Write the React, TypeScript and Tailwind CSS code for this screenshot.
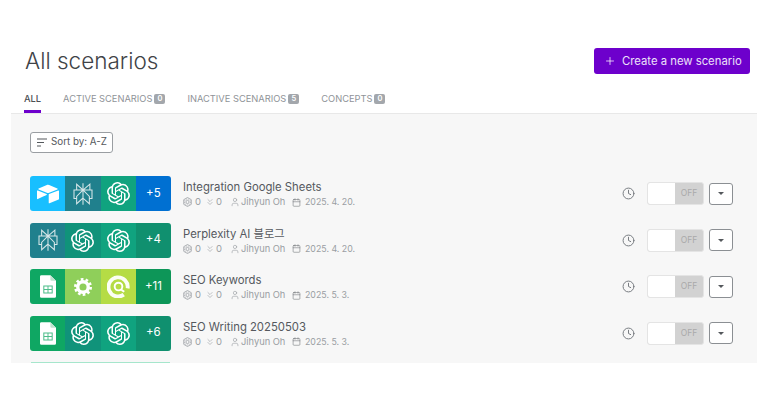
import { SiOpenai, SiAirtable, SiPerplexity } from "react-icons/si";
import { Plus, Clock, User, Calendar, ChevronsDown } from "lucide-react";

const font = { fontFamily: "Inter, 'Noto Sans CJK KR', sans-serif" };

function Sheets() {
  return (
    <svg width="16" height="23" viewBox="0 0 17 24">
      <path d="M1.5 0H11l6 6v16.5a1.5 1.5 0 0 1-1.5 1.5h-14A1.5 1.5 0 0 1 0 22.5v-21A1.5 1.5 0 0 1 1.5 0z" fill="#fff" />
      <path d="M11 0l6 6h-4.5A1.5 1.5 0 0 1 11 4.500z" fill="#bfe3cf" />
      <path d="M3.500 11h10v8.500h-10z M4.600 12.100v2.500h3.400v-2.500z M9 12.100v2.500h3.400v-2.500z M4.600 15.700v2.700h3.400v-2.700z M9 15.700v2.700h3.400v-2.700z" fill="#4dbd8a" fillRule="evenodd" />
    </svg>
  );
}

function Ring() {
  return (
    <svg width="23" height="23" viewBox="0 0 24 24" fill="none">
      <path d="M17.500 20.500A10 10 0 1 1 21.500 14" stroke="#fff" strokeWidth="4" opacity="0.95" />
      <circle cx="12" cy="12" r="4" stroke="#fff" strokeWidth="2" />
      <path d="M15 15.500l3 2" stroke="#fff" strokeWidth="2" />
    </svg>
  );
}

function Gear() {
  return (
    <svg width="18" height="18" viewBox="0 0 24 24" fill="none">
      <circle cx="12" cy="12" r="7" stroke="#fff" strokeWidth="4.500" />
      <circle cx="12" cy="12" r="10" stroke="#fff" strokeWidth="4" strokeDasharray="3.400 2.883" />
    </svg>
  );
}

function Settings() {
  return (
    <svg width="9" height="10" viewBox="0 0 18 20" fill="none" stroke="currentColor" strokeWidth="1.600" className="mr-[3px] shrink-0">
      <path d="M9 1l7.500 4.300v9.400L9 19l-7.500-4.300V5.300z" />
      <circle cx="9" cy="10" r="3.200" />
      <circle cx="9" cy="10" r="6" strokeDasharray="2 2" />
    </svg>
  );
}

function SortIcon() {
  return (
    <svg width="10" height="9" viewBox="0 0 10 9" className="mr-[4px] shrink-0" stroke="#54585c" strokeWidth="1.100">
      <path d="M0 1h10M0 4.500h7M0 8h4" />
    </svg>
  );
}

const ai = <SiOpenai className="text-white" size={23} />;
const px = <SiPerplexity className="text-[#d6e6e8]" size={22} />;

type Cell = { bg: string; node: React.ReactNode };

const rows: { name: string; date: string; cells: Cell[] }[] = [
  {
    name: "Integration Google Sheets",
    date: "2025. 4. 20.",
    cells: [
      { bg: "bg-[#18bfff]", node: <SiAirtable className="text-white" size={22} /> },
      { bg: "bg-[#20808d]", node: px },
      { bg: "bg-[#10a37f]", node: ai },
      { bg: "bg-[#0070d2]", node: "+5" },
    ],
  },
  {
    name: "Perplexity AI 블로그",
    date: "2025. 4. 20.",
    cells: [
      { bg: "bg-[#20808d]", node: px },
      { bg: "bg-[#10937a]", node: ai },
      { bg: "bg-[#10a37f]", node: ai },
      { bg: "bg-[#10906f]", node: "+4" },
    ],
  },
  {
    name: "SEO Keywords",
    date: "2025. 5. 3.",
    cells: [
      { bg: "bg-[#0fa763]", node: <Sheets /> },
      { bg: "bg-[#8fcf5a]", node: <Gear /> },
      { bg: "bg-[#b5dc45]", node: <Ring /> },
      { bg: "bg-[#0d9658]", node: "+11" },
    ],
  },
  {
    name: "SEO Writing 20250503",
    date: "2025. 5. 3.",
    cells: [
      { bg: "bg-[#0fa763]", node: <Sheets /> },
      { bg: "bg-[#10937a]", node: ai },
      { bg: "bg-[#10a37f]", node: ai },
      { bg: "bg-[#10906f]", node: "+6" },
    ],
  },
];

function Badge({ n }: { n: number }) {
  return (
    <span className="ml-[2px] flex h-[10px] w-[11px] items-center justify-center rounded-[2px] bg-[#a3a7ac] text-[7.500px] font-semibold text-white">
      {n}
    </span>
  );
}

function Tab({ label, n }: { label: string; n: number }) {
  return (
    <div className="flex h-[29px] items-center text-[9.300px] text-[#8f9398]">
      {label}
      <Badge n={n} />
    </div>
  );
}

function Row({ row }: { row: (typeof rows)[number] }) {
  return (
    <div className="flex h-[35px] items-center">
      <div className="flex h-[35px] w-[141px] overflow-hidden rounded-[3px]">
        {row.cells.map((c, i) => (
          <div key={i} className={`flex h-full w-1/4 items-center justify-center text-[11.500px] text-white ${c.bg}`}>
            {c.node}
          </div>
        ))}
      </div>
      <div className="ml-[12px] flex flex-col pt-[1px]">
        <div className="text-[11.300px] leading-[16px] text-[#55595e]">{row.name}</div>
        <div className="flex items-center text-[9.300px] leading-[14px] text-[#9a9ea3]">
          <Settings />
          <span className="w-[6px] text-[9.500px]">0</span>
          <ChevronsDown size={10} strokeWidth={1.500} className="ml-[4px] mr-[1px]" />
          <span className="w-[6px] text-[9.500px]">0</span>
          <User size={10} strokeWidth={1.500} className="ml-[8px] mr-[1px]" />
          <span className="w-[51px]">Jihyun Oh</span>
          <Calendar size={9} strokeWidth={1.500} className="mr-[4px] text-[#707478]" />
          <span className="text-[8.800px]">{row.date}</span>
        </div>
      </div>
      <div className="ml-auto flex items-center">
        <Clock size={13} strokeWidth={1.800} className="text-[#75797e]" />
        <div className="ml-[12px] flex h-[23px] w-[57px] overflow-hidden rounded-[3px] border border-[#e4e4e4] bg-[#d2d2d2]">
          <div className="h-full w-[27px] bg-white" />
          <div className="flex flex-1 items-center justify-center text-[8.500px] text-[#a9a9a9]">OFF</div>
        </div>
        <div className="ml-[5px] flex h-[22px] w-[24px] items-center justify-center rounded-[3px] border border-[#8b8f93] bg-white">
          <div className="h-0 w-0 border-x-[3px] border-t-[3px] border-x-transparent border-t-[#54585c]" />
        </div>
      </div>
    </div>
  );
}

export default function App() {
  return (
    <div className="flex h-[403px] w-[768px] flex-col bg-white pt-[48px]" style={font}>
      <div className="flex items-center justify-between pl-[25px] pr-[18px]">
        <h1 className="text-[22.500px] font-light leading-[26px] text-[#3f4347]">All scenarios</h1>
        <button className="flex h-[26px] w-[156px] items-center rounded-[3px] bg-[#6d00cc] pl-[10px] text-[11.300px] text-[#ece0f8]">
          <Plus size={12} strokeWidth={1.500} className="mr-[6px] text-white" />
          Create a new scenario
        </button>
      </div>
      <div className="mt-[10px] flex h-[29px] gap-[22px] px-[24px]">
        <div className="flex h-[29px] items-center border-b-[3px] border-[#6d00cc] pt-[3px] text-[9.300px] font-medium text-[#4b4f53]">
          ALL
        </div>
        <Tab label="ACTIVE SCENARIOS" n={0} />
        <Tab label="INACTIVE SCENARIOS" n={5} />
        <Tab label="CONCEPTS" n={0} />
      </div>
      <div className="mx-[11px] flex h-[250px] flex-col overflow-hidden border-t border-[#e8e8e8] bg-[#f7f7f7] pl-[19px] pr-[24px]">
        <div className="mt-[18px] flex h-[21px] w-[83px] shrink-0 items-center rounded-[3px] border border-[#9a9ea2] bg-white pl-[6px] text-[9.800px] text-[#54585c]">
          <SortIcon />
          Sort by: A-Z
        </div>
        <div className="mt-[23px] flex flex-col gap-[11.500px]">
          {rows.map((r) => (
            <Row key={r.name} row={r} />
          ))}
          <div className="mx-[1px] h-[2px] w-[139px] shrink-0 bg-[#a6e6cc]" />
        </div>
      </div>
    </div>
  );
}
